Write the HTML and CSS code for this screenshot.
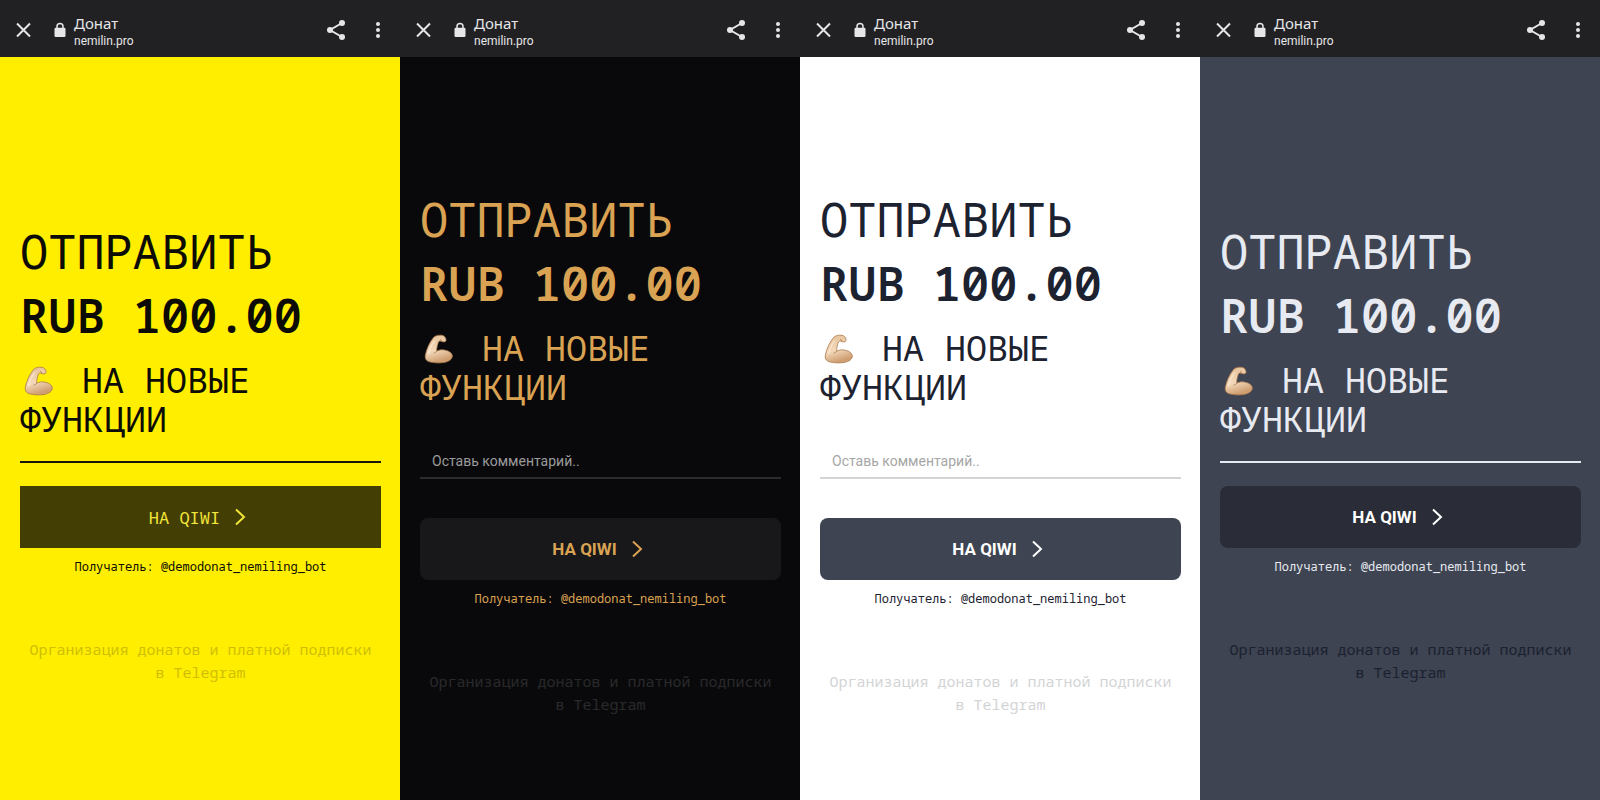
FILE: index.html
```html
<!DOCTYPE html>
<html lang="ru">
<head>
    <meta charset="UTF-8">
    <meta name="viewport" content="width=device-width, initial-scale=1.0">
    <title>Донат</title>
    <link rel="stylesheet" href="styles.css">
</head>
<body>
    <!-- Shared icons -->
    <svg class="sprite" aria-hidden="true">
        <symbol id="close" viewBox="0 0 24 24">
            <path d="M5 5.5l13 13M18 5.5l-13 13" fill="none" stroke="currentColor" stroke-width="2"/>
        </symbol>
        <symbol id="lock" viewBox="0 0 12 16">
            <path d="M3 7V4.5a3 3 0 0 1 6 0V7" fill="none" stroke="currentColor" stroke-width="1.5"/>
            <rect x="0.5" y="5.8" width="11" height="9.2" rx="1.2" fill="currentColor"/>
        </symbol>
        <symbol id="share" viewBox="0 0 24 24">
            <path d="M18 5L6 12l12 7" fill="none" stroke="currentColor" stroke-width="2"/>
            <circle cx="18" cy="5" r="3" fill="currentColor"/>
            <circle cx="6" cy="12" r="3" fill="currentColor"/>
            <circle cx="18" cy="19" r="3" fill="currentColor"/>
        </symbol>
        <symbol id="dots" viewBox="0 0 24 24">
            <circle cx="12" cy="6" r="2" fill="currentColor"/>
            <circle cx="12" cy="12" r="2" fill="currentColor"/>
            <circle cx="12" cy="18" r="2" fill="currentColor"/>
        </symbol>
        <symbol id="chevron" viewBox="0 0 24 24">
            <path d="M8 4.500l8 7.500-8 7.500" fill="none" stroke="currentColor" stroke-width="2"/>
        </symbol>
        <linearGradient id="skin" x1="0" y1="0" x2="0.3" y2="1">
            <stop offset="0" stop-color="#e3bd92"/>
            <stop offset="0.6" stop-color="#f3d8ba"/>
            <stop offset="1" stop-color="#cf9f72"/>
        </linearGradient>
        <symbol id="arm" viewBox="0 0 30 30">
            <path d="M9.500 3.500C11.500 1.500 15 .8 18 1.300c2.200.4 3.600 2 4 4.200.2 1.500-.6 2.400-2 2.400l-2.200-.3c-1.200-.8-2.400-.9-3.300.2-.8 2.500-2 5.500-1.800 9.500 2.200-1.300 5-1.800 7.800-1.200 4.500.8 7.300 2.800 7.800 5.500.3 3.600-3.300 6-8.300 6.900-4.500.6-9 .6-13.500-.4C3 27.400.8 25.500 1.300 21.500 2.500 15 5.500 8.500 9.500 3.500z" fill="url(#skin)" stroke="#a9784c" stroke-width="0.8"/>
            <path d="M12.700 17.300c-.8.900-1.700 1.500-3 1.800M17.800 7.600c.2-1-.4-1.800-1.800-2.200" fill="none" stroke="#a9784c" stroke-width="0.8"/>
            <path d="M4.500 20.500c.8-5 2.800-9.500 6.200-14" fill="none" stroke="#fff0dc" stroke-width="1.5" opacity="0.6"/>
        </symbol>
    </svg>

    <div class="screens">
        <section class="screen theme-yellow">
            <header class="topbar">
                <button class="icon-button" aria-label="Закрыть"><svg class="icon"><use href="#close"/></svg></button>
                <svg class="lock"><use href="#lock"/></svg>
                <div class="site">
                    <div class="site-title">Донат</div>
                    <div class="site-host">nemilin.pro</div>
                </div>
                <button class="icon-button" aria-label="Поделиться"><svg class="icon"><use href="#share"/></svg></button>
                <button class="icon-button" aria-label="Меню"><svg class="icon"><use href="#dots"/></svg></button>
            </header>
            <main class="content">
                <h1 class="title">ОТПРАВИТЬ</h1>
                <div class="amount">RUB 100.00</div>
                <h2 class="purpose"><svg class="arm"><use href="#arm"/></svg> НА НОВЫЕ ФУНКЦИИ</h2>
                <hr class="divider">
                <button class="pay">НА QIWI <svg class="icon"><use href="#chevron"/></svg></button>
                <p class="receiver">Получатель: @demodonat_nemiling_bot</p>
                <a class="about" href="#">Организация донатов и платной подписки в Telegram</a>
            </main>
        </section>

        <section class="screen theme-black">
            <header class="topbar">
                <button class="icon-button" aria-label="Закрыть"><svg class="icon"><use href="#close"/></svg></button>
                <svg class="lock"><use href="#lock"/></svg>
                <div class="site">
                    <div class="site-title">Донат</div>
                    <div class="site-host">nemilin.pro</div>
                </div>
                <button class="icon-button" aria-label="Поделиться"><svg class="icon"><use href="#share"/></svg></button>
                <button class="icon-button" aria-label="Меню"><svg class="icon"><use href="#dots"/></svg></button>
            </header>
            <main class="content">
                <h1 class="title">ОТПРАВИТЬ</h1>
                <div class="amount">RUB 100.00</div>
                <h2 class="purpose"><svg class="arm"><use href="#arm"/></svg> НА НОВЫЕ ФУНКЦИИ</h2>
                <input class="comment" type="text" aria-label="Комментарий" placeholder="Оставь комментарий..">
                <button class="pay">НА QIWI <svg class="icon"><use href="#chevron"/></svg></button>
                <p class="receiver">Получатель: @demodonat_nemiling_bot</p>
                <a class="about" href="#">Организация донатов и платной подписки в Telegram</a>
            </main>
        </section>

        <section class="screen theme-white">
            <header class="topbar">
                <button class="icon-button" aria-label="Закрыть"><svg class="icon"><use href="#close"/></svg></button>
                <svg class="lock"><use href="#lock"/></svg>
                <div class="site">
                    <div class="site-title">Донат</div>
                    <div class="site-host">nemilin.pro</div>
                </div>
                <button class="icon-button" aria-label="Поделиться"><svg class="icon"><use href="#share"/></svg></button>
                <button class="icon-button" aria-label="Меню"><svg class="icon"><use href="#dots"/></svg></button>
            </header>
            <main class="content">
                <h1 class="title">ОТПРАВИТЬ</h1>
                <div class="amount">RUB 100.00</div>
                <h2 class="purpose"><svg class="arm"><use href="#arm"/></svg> НА НОВЫЕ ФУНКЦИИ</h2>
                <input class="comment" type="text" aria-label="Комментарий" placeholder="Оставь комментарий..">
                <button class="pay">НА QIWI <svg class="icon"><use href="#chevron"/></svg></button>
                <p class="receiver">Получатель: @demodonat_nemiling_bot</p>
                <a class="about" href="#">Организация донатов и платной подписки в Telegram</a>
            </main>
        </section>

        <section class="screen theme-slate">
            <header class="topbar">
                <button class="icon-button" aria-label="Закрыть"><svg class="icon"><use href="#close"/></svg></button>
                <svg class="lock"><use href="#lock"/></svg>
                <div class="site">
                    <div class="site-title">Донат</div>
                    <div class="site-host">nemilin.pro</div>
                </div>
                <button class="icon-button" aria-label="Поделиться"><svg class="icon"><use href="#share"/></svg></button>
                <button class="icon-button" aria-label="Меню"><svg class="icon"><use href="#dots"/></svg></button>
            </header>
            <main class="content">
                <h1 class="title">ОТПРАВИТЬ</h1>
                <div class="amount">RUB 100.00</div>
                <h2 class="purpose"><svg class="arm"><use href="#arm"/></svg> НА НОВЫЕ ФУНКЦИИ</h2>
                <hr class="divider">
                <button class="pay">НА QIWI <svg class="icon"><use href="#chevron"/></svg></button>
                <p class="receiver">Получатель: @demodonat_nemiling_bot</p>
                <a class="about" href="#">Организация донатов и платной подписки в Telegram</a>
            </main>
        </section>
    </div>
</body>
</html>
```
FILE: styles.css
```css
* {
    box-sizing: border-box;
}
body {
    margin: 0;
    font-family: "Noto Sans Mono", "DejaVu Sans Mono", monospace;
}
.sprite {
    position: absolute;
    width: 0;
    height: 0;
}
.screens {
    display: grid;
    grid-template-columns: repeat(4, 1fr);
    min-height: 100vh;
}
.screen {
    display: flex;
    flex-direction: column;
    background-color: var(--bg);
    color: var(--text);
}

/* Browser bar */
.topbar {
    display: flex;
    align-items: center;
    height: 57px;
    padding: 3px 10px 0 12px;
    background-color: #212124;
    color: #e6e6e8;
    font-family: "Noto Sans", sans-serif;
}
.icon-button {
    display: flex;
    padding: 0;
    border: none;
    background: none;
    color: inherit;
    cursor: pointer;
}
.icon {
    width: 24px;
    height: 24px;
}
.icon-button + .icon-button {
    margin-left: 18px;
}
.lock {
    width: 12px;
    height: 16px;
    margin-left: 18px;
}
.site {
    flex: 1;
    padding: 4px 0 0 8px;
}
.site-title {
    font-size: 15px;
    line-height: 18px;
}
.site-host {
    font-family: Roboto, sans-serif;
    font-size: 12px;
    line-height: 18px;
}

/* Donation form */
.content {
    flex: 1;
    display: flex;
    flex-direction: column;
    justify-content: center;
    padding: 46px 19px 0 20px;
}
.title, .amount {
    margin: 0;
    font-size: 47px;
    line-height: 64px;
    font-weight: 400;
}
.amount {
    font-weight: 600;
}
.purpose {
    margin: 13px 0 0;
    font-size: 35px;
    line-height: 39px;
    font-weight: 400;
}
.arm {
    width: 30px;
    height: 30px;
    margin: 0 7px 0 4px;
    vertical-align: -3px;
}
.divider {
    width: 100%;
    height: 2px;
    margin: 23px 0 0;
    border: none;
    background-color: var(--line);
}
.comment {
    width: 100%;
    height: 36px;
    margin-top: 37px;
    padding: 2px 12px 0;
    border: none;
    border-bottom: 2px solid var(--line);
    background: none;
    color: var(--text);
    font-family: Roboto, sans-serif;
    font-size: 14px;
    outline: none;
}
.comment::placeholder {
    color: var(--placeholder);
    opacity: 1;
}
.pay {
    display: flex;
    justify-content: center;
    align-items: center;
    gap: 8px;
    height: 62px;
    margin-top: 23px;
    border: none;
    border-radius: 8px;
    background-color: var(--button);
    color: var(--button-text);
    font-family: Roboto, sans-serif;
    font-size: 17px;
    font-weight: 700;
    cursor: pointer;
}
.comment + .pay {
    margin-top: 39px;
}
.receiver {
    margin: 10px 0 0;
    font-size: 12px;
    line-height: 18px;
    text-align: center;
}
.about {
    margin-top: 62px;
    padding: 0 4px;
    font-size: 15px;
    line-height: 23px;
    text-align: center;
    text-decoration: none;
    color: var(--muted);
}

/* Themes */
.theme-yellow {
    --bg: #ffee00;
    --text: #0c0b05;
    --line: #17150a;
    --button: #433e04;
    --button-text: #f3e63a;
    --muted: #d0bf05;
}
.theme-yellow .pay {
    border-radius: 0;
    font-family: inherit;
    font-weight: 400;
}
.theme-black {
    --bg: #09090b;
    --text: #daa353;
    --line: #2c2c2f;
    --placeholder: #9b9b9d;
    --button: #18181a;
    --button-text: #daa353;
    --muted: #29292b;
}
.theme-white {
    --bg: #ffffff;
    --text: #1c2230;
    --line: #d4d4d5;
    --placeholder: #a6a6a6;
    --button: #3e4451;
    --button-text: #ffffff;
    --muted: #d3d4d6;
}
.theme-slate {
    --bg: #3e4451;
    --text: #e8eaf2;
    --line: #e8eaf2;
    --button: #2a2d37;
    --button-text: #ffffff;
    --muted: #1b2130;
}
```
